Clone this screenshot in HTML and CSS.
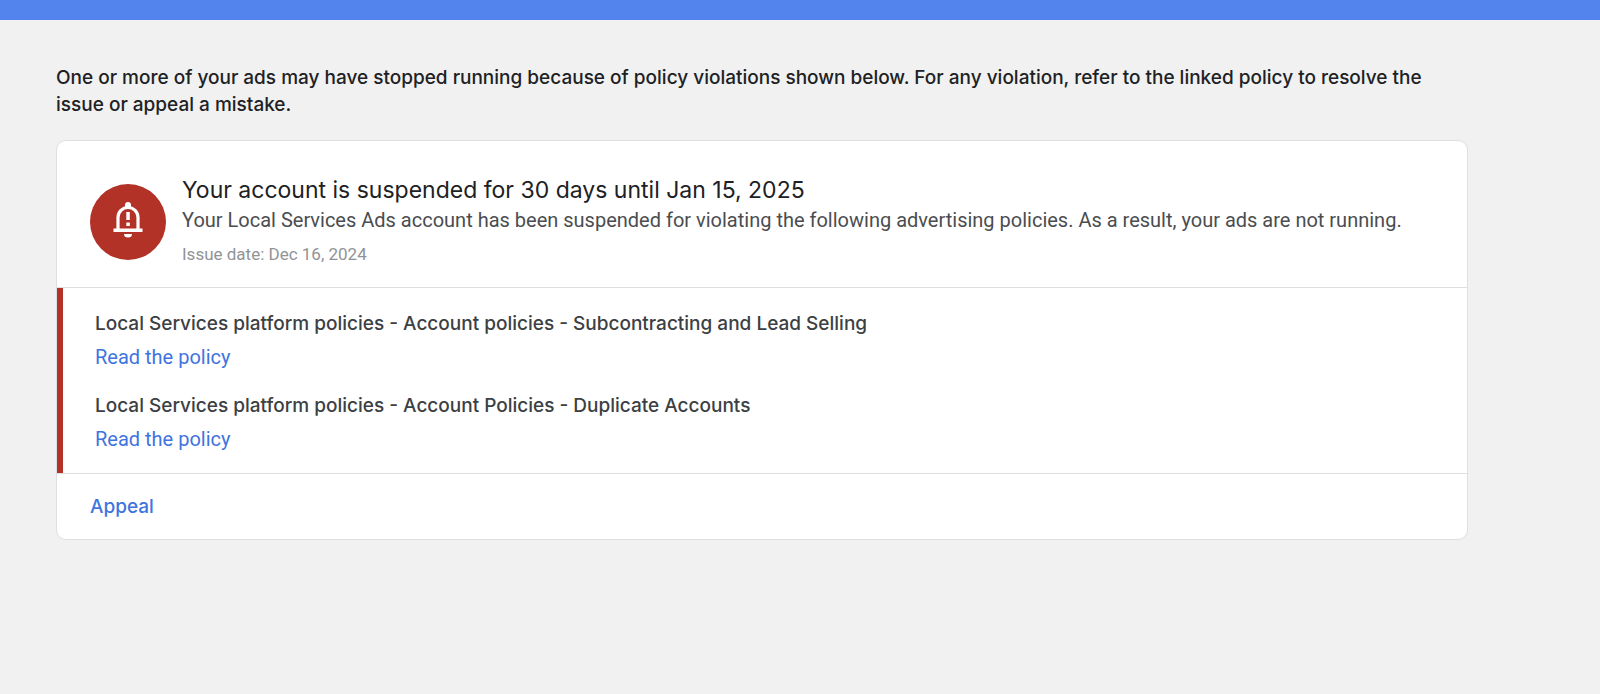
FILE: index.html
```html
<!DOCTYPE html>
<html lang="en">
<head>
<meta charset="utf-8">
<meta name="viewport" content="width=device-width, initial-scale=1">
<title>Policy violations</title>
<link rel="stylesheet" href="styles.css">
</head>
<body>
<header class="topbar"></header>
<main class="page">
  <p class="intro">One or more of your ads may have stopped running because of policy violations shown below. For any violation, refer to the linked policy to resolve the issue or appeal a mistake.</p>
  <section class="card">
    <div class="summary">
      <span class="badge">
        <svg class="bell" viewBox="0 0 32 38" aria-hidden="true">
          <path d="M6 29V16.500a10 10 0 0 1 20 0V29" fill="none" stroke="#fff" stroke-width="3.200"/>
          <path d="M13 7V4a3 3 0 0 1 6 0v3zM1.500 27.500h29v3.500h-29zM12 33h8a4 3.500 0 0 1-8 0zM14.300 11h3.500v8h-3.500zM14.300 21.500h3.500v3.500h-3.500z" fill="#fff"/>
        </svg>
      </span>
      <div class="details">
        <h1 class="title">Your account is suspended for 30 days until Jan 15, 2025</h1>
        <p class="description">Your Local Services Ads account has been suspended for violating the following advertising policies. As a result, your ads are not running.</p>
        <p class="date">Issue date: Dec 16, 2024</p>
      </div>
    </div>
    <ul class="policies">
      <li class="policy">
        <h2 class="policy-name">Local Services platform policies - Account policies - Subcontracting and Lead Selling</h2>
        <a class="policy-link" href="#">Read the policy</a>
      </li>
      <li class="policy">
        <h2 class="policy-name">Local Services platform policies - Account Policies - Duplicate Accounts</h2>
        <a class="policy-link" href="#">Read the policy</a>
      </li>
    </ul>
    <div class="actions">
      <button class="appeal" type="button">Appeal</button>
    </div>
  </section>
</main>
</body>
</html>
```
FILE: styles.css
```css
* { box-sizing: border-box; }

body {
  margin: 0;
  background: #f1f1f1;
  color: #202124;
  font-family: Roboto, sans-serif;
  font-size: 20px;
}

h1, h2, p, ul { margin: 0; padding: 0; }

.topbar {
  height: 20px;
  background: #5383ec;
}

.page { padding: 44px 132px 40px 56px; }

.intro {
  font-family: Inter, sans-serif;
  font-size: 19px;
  font-weight: 500;
  line-height: 27px;
}

.card {
  margin-top: 22px;
  background: #fff;
  border: 1px solid #dedfe1;
  border-radius: 10px;
  overflow: hidden;
}

.summary {
  display: flex;
  align-items: center;
  gap: 16px;
  padding: 32px 32px 20px 33px;
  border-bottom: 1px solid #dedfe1;
}

.badge {
  display: flex;
  flex: none;
  align-items: center;
  justify-content: center;
  width: 76px;
  height: 76px;
  margin-top: 4px;
  border-radius: 50%;
  background: #b23228;
}

.bell { width: 32px; height: 38px; margin-bottom: 4px; }

.title {
  font-family: Inter, sans-serif;
  font-size: 23px;
  font-weight: 400;
  line-height: 34px;
}

.description {
  color: #4b4d50;
  line-height: 26px;
}

.date {
  margin-top: 8px;
  color: #919396;
  font-size: 17px;
  line-height: 26px;
}

.policies {
  display: grid;
  gap: 16px;
  padding: 19px 32px 18px;
  border-left: 6px solid #b23228;
  list-style: none;
}

.policy-name {
  color: #3c4043;
  font-family: Inter, sans-serif;
  font-size: 19px;
  font-weight: 500;
  line-height: 34px;
}

.policy-link {
  display: inline-block;
  color: #3f74df;
  line-height: 32px;
  text-decoration: none;
}

.actions {
  padding: 16px 33px;
  border-top: 1px solid #dedfe1;
}

.appeal {
  display: block;
  padding: 0;
  border: 0;
  background: none;
  color: #3f74df;
  font-family: Inter, sans-serif;
  font-size: 19px;
  font-weight: 500;
  line-height: 33px;
  cursor: pointer;
}
```
